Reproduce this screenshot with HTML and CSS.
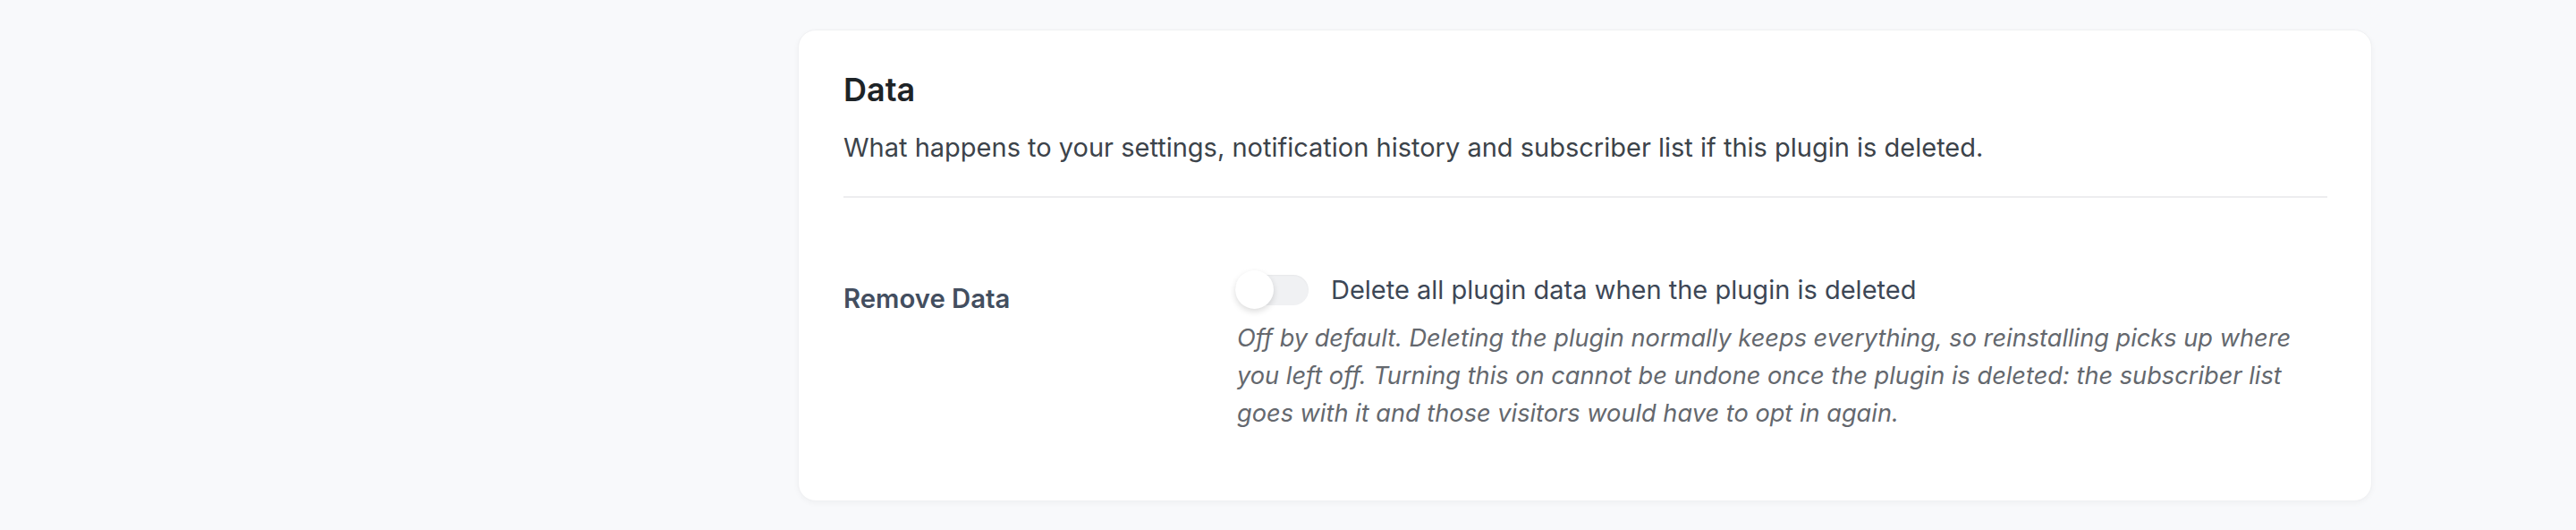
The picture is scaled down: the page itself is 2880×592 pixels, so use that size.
FILE: index.html
```html
<!DOCTYPE html>
<html lang="en">
<head>
<meta charset="utf-8">
<title>Data settings</title>
<link rel="stylesheet" href="styles.css">
</head>
<body>
<main class="page">
  <section class="card">
    <h2 class="card-title">Data</h2>
    <p class="card-desc">What happens to your settings, notification history and subscriber list if this plugin is deleted.</p>
    <hr class="divider">
    <div class="field-row">
      <div class="field-label">Remove Data</div>
      <div class="field-control">
        <label class="toggle-line">
          <span class="toggle"><span class="knob"></span></span>
          <span class="toggle-text">Delete all plugin data when the plugin is deleted</span>
        </label>
        <p class="field-help">Off by default. Deleting the plugin normally keeps everything, so reinstalling picks up where you left off. Turning this on cannot be undone once the plugin is deleted: the subscriber list goes with it and those visitors would have to opt in again.</p>
      </div>
    </div>
  </section>
</main>
</body>
</html>
```
FILE: styles.css
```css
html, body {
  margin: 0;
  padding: 0;
}
body {
  background: #f8f9fb;
  font-family: Inter, "Noto Sans", "Liberation Sans", sans-serif;
  width: 2880px;
  height: 592px;
  overflow: hidden;
}
.page {
  display: flex;
  justify-content: flex-start;
  padding: 33px 0 0 892px;
}
.card {
  box-sizing: border-box;
  width: 1760px;
  height: 527px;
  background: #ffffff;
  border-radius: 20px;
  border: 1px solid #f0f1f3;
  box-shadow: 0 2px 6px rgba(0, 0, 0, 0.04);
  padding: 45px 49px 48px 50px;
}
.card-title {
  margin: 0;
  font-size: 36px;
  line-height: 43px;
  font-weight: 600;
  color: #1d2327;
}
.card-desc {
  margin: 20px 0 0;
  font-size: 29px;
  line-height: 45px;
  color: #3c434a;
}
.divider {
  margin: 32px 0 0;
  border: 0;
  height: 2px;
  background: #ededef;
}
.field-row {
  display: flex;
  padding: 46px 0 30px;
}
.field-label {
  width: 438px;
  flex: none;
  padding-top: 47px;
  font-size: 29.3px;
  line-height: 39px;
  font-weight: 600;
  color: #434e5f;
}
.field-control {
  flex: 1;
  min-width: 0;
  padding-top: 35px;
}
.toggle-line {
  display: flex;
  align-items: center;
  gap: 25px;
  height: 44px;
}
.toggle {
  position: relative;
  width: 82px;
  height: 34px;
  border-radius: 17px;
  background: #f0f1f3;
  box-shadow: inset 0 1px 2px rgba(0, 0, 0, 0.04);
  flex: none;
}
.knob {
  position: absolute;
  left: 0;
  top: -5px;
  width: 43px;
  height: 43px;
  border-radius: 50%;
  background: #ffffff;
  box-shadow: 0 3px 7px rgba(0, 0, 0, 0.14);
}
.toggle-text {
  font-size: 29px;
  line-height: 40px;
  color: #3d4756;
}
.field-help {
  margin: 11px 0 0 2px;
  font-size: 27.2px;
  line-height: 42px;
  font-style: italic;
  color: #64686e;
  max-width: 1220px;
}
```
